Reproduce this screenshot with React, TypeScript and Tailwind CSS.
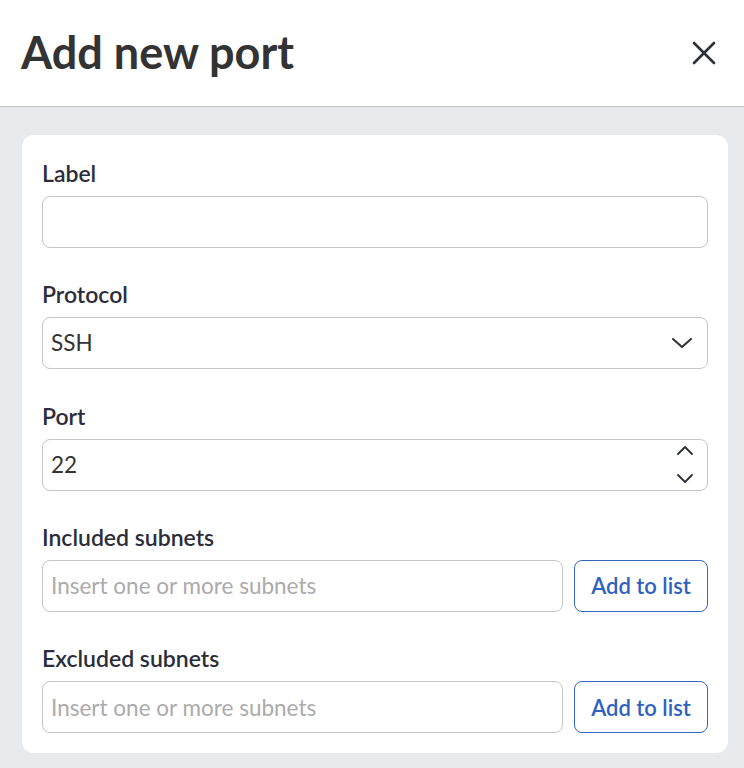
import React from "react";

const font = { fontFamily: "Lato, 'Noto Sans', sans-serif" };

function Chevron({ up = false, w = 20, h = 10, sw = 2 }: { up?: boolean; w?: number; h?: number; sw?: number }) {
  return (
    <svg width={w} height={h} viewBox={`0 0 ${w} ${h}`} fill="none">
      <path
        d={up ? `M1 ${h - 1} L${w / 2} 1 L${w - 1} ${h - 1}` : `M1 1 L${w / 2} ${h - 1} L${w - 1} 1`}
        stroke="#2d2f3b"
        strokeWidth={sw}
        strokeLinecap="round"
        strokeLinejoin="round"
      />
    </svg>
  );
}

function FieldLabel({ children }: { children: React.ReactNode }) {
  return <div className="text-[23px] leading-[36px] font-semibold text-[#2b2d3a] mb-[5px]">{children}</div>;
}

const inputCls =
  "w-full h-[52px] rounded-[8px] border border-[#c6c6c6] bg-white px-[8px] text-[22.5px] text-[#333333] placeholder:text-[#ababab] outline-none";

function SubnetRow() {
  return (
    <div className="flex gap-[11px]">
      <input className={inputCls + " flex-1"} placeholder="Insert one or more subnets" />
      <button className="h-[52px] w-[134px] shrink-0 rounded-[8px] border border-[#3567c2] text-[22px] font-semibold text-[#2f62c0] bg-white">
        Add to list
      </button>
    </div>
  );
}

export default function App() {
  return (
    <div style={font} className="w-[744px] h-[768px] bg-[#e9eaee] flex flex-col overflow-hidden">
      <div className="h-[107px] shrink-0 bg-white border-b border-[#c4c4c4] flex items-center justify-between pl-[21px] pr-[28px]">
        <div className="text-[45px] font-bold text-[#333333] leading-none pb-[2px]">Add new port</div>
        <svg width="24" height="24" viewBox="0 0 24 24" fill="none">
          <path d="M2 2 L22 22 M22 2 L2 22" stroke="#2d2f3b" strokeWidth="2.6" strokeLinecap="round" />
        </svg>
      </div>
      <div className="pt-[28px] pl-[22px] pr-[16px]">
        <div className="bg-white rounded-[12px] p-5 flex flex-col gap-[28.3px]">
          <div>
            <FieldLabel>Label</FieldLabel>
            <input className={inputCls} />
          </div>
          <div>
            <FieldLabel>Protocol</FieldLabel>
            <div className="relative">
              <select className={inputCls + " appearance-none"} defaultValue="SSH">
                <option>SSH</option>
                <option>HTTP</option>
                <option>HTTPS</option>
              </select>
              <div className="absolute right-[16px] top-[21px] pointer-events-none">
                <Chevron />
              </div>
            </div>
          </div>
          <div>
            <FieldLabel>Port</FieldLabel>
            <div className="relative">
              <input className={inputCls} defaultValue="22" />
              <div className="absolute right-[15px] top-[7px] flex flex-col gap-[19px] pointer-events-none">
                <Chevron up w={16} h={9} sw={1.8} />
                <Chevron w={16} h={9} sw={1.8} />
              </div>
            </div>
          </div>
          <div>
            <FieldLabel>Included subnets</FieldLabel>
            <SubnetRow />
          </div>
          <div>
            <FieldLabel>Excluded subnets</FieldLabel>
            <SubnetRow />
          </div>
        </div>
      </div>
    </div>
  );
}
